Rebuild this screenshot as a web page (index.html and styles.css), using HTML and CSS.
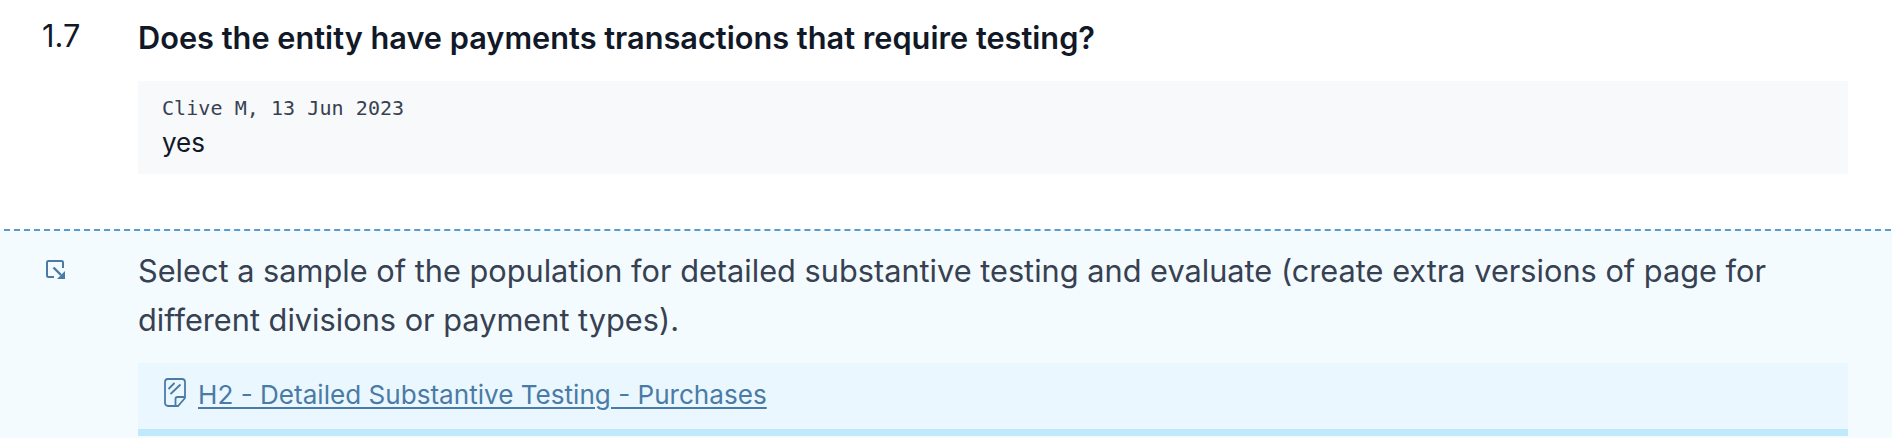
FILE: index.html
```html
<!DOCTYPE html>
<html lang="en">
<head>
	<meta charset="UTF-8">
	<title>Payments testing</title>
	<link rel="stylesheet" href="styles.css">
</head>
<body>
	<div class="step">
		<div class="step-num">1.7</div>
		<div class="step-body">
			<h2 class="question">Does the entity have payments transactions that require testing?</h2>
			<div class="answer">
				<p class="answer-meta">Clive M, 13 Jun 2023</p>
				<p class="answer-text">yes</p>
			</div>
		</div>
	</div>
	<div class="sub-wrap">
		<div class="divider"></div>
		<div class="step step-sub">
			<div class="step-num">
				<svg class="icon-goto" width="20" height="20" viewBox="0 0 20 20" fill="none" stroke="#4a7ba6" stroke-width="2">
					<path d="M8 17H2.500A1.500 1.500 0 0 1 1 15.500V2.500A1.500 1.500 0 0 1 2.500 1H15.500A1.500 1.500 0 0 1 17 2.500V8"/>
					<path d="M7.500 7.500L15 15" stroke-width="2.400"/>
					<path d="M19 11V19H11Z" fill="#4a7ba6" stroke="none"/>
				</svg>
			</div>
			<div class="step-body">
				<p class="instruction">Select a sample of the population for detailed substantive testing and evaluate (create extra versions of page for different divisions or payment types).</p>
				<div class="link-box">
					<svg class="icon-page" width="22" height="29" viewBox="0 0 22 29" fill="none" stroke="#4a7ba6" stroke-width="1.800">
						<path d="M14 28H4A3 3 0 0 1 1 25V4A3 3 0 0 1 4 1H18A3 3 0 0 1 21 4V20L14 28H11.500V21A2 2 0 0 1 13.500 19H21"/>
						<path d="M4.500 11L10.500 5M6.500 16L16.500 6.500"/>
					</svg>
					<a href="#">H2 - Detailed Substantive Testing - Purchases</a>
				</div>
			</div>
		</div>
	</div>
</body>
</html>
```
FILE: styles.css
```css
body,h2,p{
	margin: 0;
	padding: 0;
}
body{
	height: 438px;
	font-family: Inter, sans-serif;
	color: #111827;
	background: white;
	overflow: hidden;
}
.step{
	display: flex;
	height: 229px;
	padding-right: 44px;
}
.step-num{
	flex: none;
	width: 96px;
	padding: 16px 0 0 42px;
	font-size: 30.72px;
	line-height: 40px;
}
.step-body{
	flex: 1;
}
.question{
	padding-top: 18px;
	font-size: 30.72px;
	font-weight: 600;
	line-height: 40px;
}
.answer{
	height: 93px;
	margin-top: 23px;
	padding: 0 24px;
	background: #f8f9fb;
	overflow: hidden;
}
.answer-meta{
	padding-top: 13px;
	font-family: "DejaVu Sans Mono", monospace;
	font-size: 20px;
	letter-spacing: 0.07px;
	line-height: 28px;
	color: #374151;
}
.answer-text{
	font-size: 26px;
	line-height: 42px;
}
.sub-wrap{
	height: 209px;
	background: #f3fbff;
	overflow: hidden;
}
.divider{
	width: 1907px;
	margin-left: 4px;
	border-top: 2px dashed #5a9bcf;
}
.step-sub{
	height: 207px;
}
.step-sub .step-num{
	width: 92px;
	padding: 29px 0 0 46px;
	line-height: 0;
}
.instruction{
	padding-top: 15px;
	font-size: 30.72px;
	line-height: 49px;
	color: #374151;
}
.link-box{
	display: flex;
	align-items: flex-start;
	height: 51px;
	margin-top: 19px;
	padding: 15px 26px 0;
	background: #eaf7fe;
	border-bottom: 7px solid #bfeafb;
}
.icon-page{
	margin-right: 12px;
}
.link-box a{
	font-size: 26.1px;
	line-height: 34px;
	color: #4a7ba6;
	text-decoration-thickness: 2px;
	text-underline-offset: 3px;
}
```
